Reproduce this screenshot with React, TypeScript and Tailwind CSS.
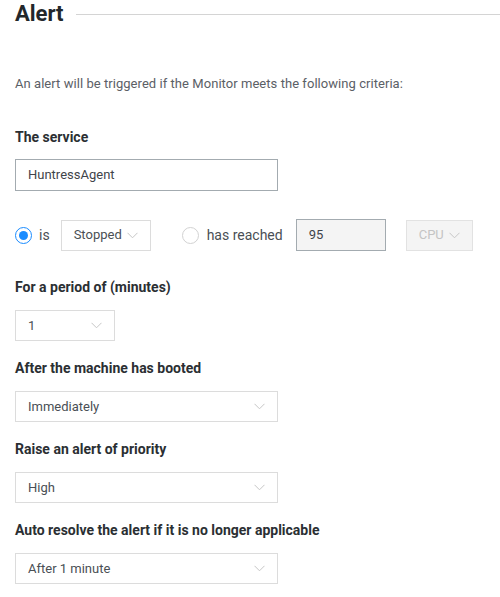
const Chevron = () => (
  <svg width="11" height="7" viewBox="0 0 11 7" fill="none" className="shrink-0">
    <path d="M0.5 0.8 L5.5 5.8 L10.5 0.8" stroke="#c6c6c6" strokeWidth="1" />
  </svg>
);

const Select = ({ value, width, disabled = false }: { value: string; width: string; disabled?: boolean }) => (
  <div
    className={`${width} h-[31px] flex items-center justify-between pl-3 pr-[12px] border ${
      disabled ? 'bg-[#f4f4f4] border-[#e2e2e2] text-[#c4c4c4]' : 'bg-white border-[#dcdcdc] text-[#4a4f55]'
    }`}
  >
    <span className="text-[13px]">{value}</span>
    <Chevron />
  </div>
);

const Label = ({ children }: { children: string }) => (
  <div className="text-[14px] font-bold text-[#2b2f33] leading-4">{children}</div>
);

const Radio = ({ checked }: { checked: boolean }) => (
  <span
    className={`w-[17px] h-[17px] rounded-full border flex items-center justify-center bg-white ${
      checked ? 'border-[#1a8cff]' : 'border-[#d2d2d2]'
    }`}
  >
    {checked && <span className="w-[9px] h-[9px] rounded-full bg-[#1a8cff]" />}
  </span>
);

export default function App() {
  return (
    <div className="w-[500px] h-[597px] bg-white px-[15px] overflow-hidden" style={{ fontFamily: 'Roboto, "Liberation Sans", sans-serif' }}>
      <div className="flex items-center gap-3 pt-[1px] -mr-[15px]">
        <h2 className="text-[22px] font-bold text-[#23272b] leading-[26px]">Alert</h2>
        <div className="flex-1 h-px bg-[#d4d4d4] mt-[1px]" />
      </div>

      <p className="mt-[49px] text-[13px] tracking-[0.05px] text-[#5b6066] leading-4">
        An alert will be triggered if the Monitor meets the following criteria:
      </p>

      <div className="mt-[37px]">
        <Label>The service</Label>
      </div>
      <div className="mt-[14px] w-[263px] h-[32px] border border-[#a3abb0] flex items-center px-3 text-[13px] text-[#3f444a]">
        HuntressAgent
      </div>

      <div className="mt-[28px] flex items-center h-[32px]">
        <Radio checked />
        <span className="ml-[7px] text-[14px] text-[#4a4f55]">is</span>
        <div className="ml-[11px]">
          <Select value="Stopped" width="w-[90px]" />
        </div>
        <div className="ml-[31px]">
          <Radio checked={false} />
        </div>
        <span className="ml-[8px] text-[14px] text-[#4a4f55]">has reached</span>
        <div className="ml-[13px] w-[90px] h-[32px] bg-[#f4f4f4] border border-[#a3abb0] flex items-center px-3 text-[13px] text-[#3f444a]">
          95
        </div>
        <div className="ml-[20px]">
          <Select value="CPU" width="w-[67px]" disabled />
        </div>
      </div>

      <div className="mt-[28px]">
        <Label>For a period of (minutes)</Label>
      </div>
      <div className="mt-[15px]">
        <Select value="1" width="w-[100px]" />
      </div>

      <div className="mt-[19px]">
        <Label>After the machine has booted</Label>
      </div>
      <div className="mt-[15px]">
        <Select value="Immediately" width="w-[263px]" />
      </div>

      <div className="mt-[19px]">
        <Label>Raise an alert of priority</Label>
      </div>
      <div className="mt-[15px]">
        <Select value="High" width="w-[263px]" />
      </div>

      <div className="mt-[19px]">
        <Label>Auto resolve the alert if it is no longer applicable</Label>
      </div>
      <div className="mt-[15px]">
        <Select value="After 1 minute" width="w-[263px]" />
      </div>
    </div>
  );
}
